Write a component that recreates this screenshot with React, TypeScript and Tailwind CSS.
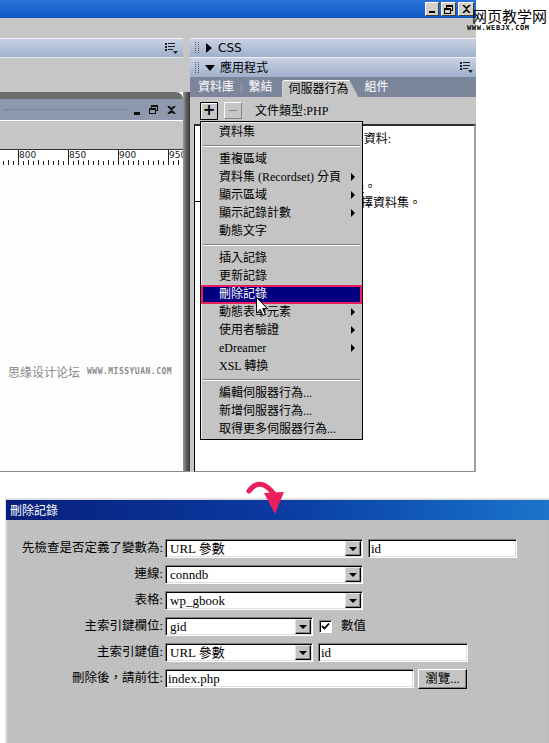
import React from "react";

type Item = { t: string; sub?: boolean; sel?: boolean } | "sep";

const menu: Item[] = [
  { t: "資料集" },
  "sep",
  { t: "重複區域" },
  { t: "資料集 (Recordset) 分頁", sub: true },
  { t: "顯示區域", sub: true },
  { t: "顯示記錄計數", sub: true },
  { t: "動態文字" },
  "sep",
  { t: "插入記錄" },
  { t: "更新記錄" },
  { t: "刪除記錄", sel: true },
  { t: "動態表單元素", sub: true },
  { t: "使用者驗證", sub: true },
  { t: "eDreamer", sub: true },
  { t: "XSL 轉換" },
  "sep",
  { t: "編輯伺服器行為..." },
  { t: "新增伺服器行為..." },
  { t: "取得更多伺服器行為..." },
];

function OptionsIcon() {
  return (
    <svg width="13" height="11" viewBox="0 0 13 11">
      <rect x="0" y="0" width="2" height="2" fill="#222" />
      <rect x="3" y="0" width="7" height="1" fill="#222" />
      <rect x="0" y="3" width="2" height="2" fill="#222" />
      <rect x="3" y="3" width="7" height="1" fill="#222" />
      <rect x="0" y="6" width="2" height="2" fill="#222" />
      <rect x="3" y="6" width="5" height="1" fill="#222" />
      <polygon points="8,8 13,8 10.5,11" fill="#222" />
    </svg>
  );
}

function Grip() {
  return (
    <svg width="5" height="12" viewBox="0 0 5 12">
      {[0, 2, 4, 6, 8, 10].map((y) => (
        <g key={y}>
          <rect x="0" y={y} width="1" height="1" fill="#555" />
          <rect x="3" y={y} width="1" height="1" fill="#555" />
        </g>
      ))}
    </svg>
  );
}

function Ruler() {
  const ticks = [];
  for (let x = 3; x < 183; x += 5) ticks.push(x);
  return (
    <svg width="183" height="16" viewBox="0 0 183 16" className="block">
      <rect x="0" y="0" width="183" height="16" fill="#fff" />
      <rect x="0" y="0" width="183" height="1" fill="#333" />
      {ticks.map((x) => {
        const major = (x - 18) % 50 === 0;
        const mid = (x - 18) % 10 === 0;
        return (
          <rect
            key={x}
            x={x}
            y={major ? 1 : mid ? 11 : 12}
            width="1"
            height={major ? 15 : mid ? 5 : 4}
            fill="#222"
          />
        );
      })}
      {[
        [19, "800"],
        [69, "850"],
        [119, "900"],
        [169, "950"],
      ].map(([x, t]) => (
        <text key={t as string} x={x as number} y="9" fontSize="9" fontFamily="DejaVu Sans, sans-serif" fill="#222">
          {t}
        </text>
      ))}
    </svg>
  );
}

function Select({ w, value }: { w: string; value: string }) {
  return (
    <div
      className={`flex items-center h-[19px] ${w} bg-white border border-t-[#808080] border-l-[#808080] border-r-white border-b-white shadow-[inset_1px_1px_0_#000,inset_-1px_-1px_0_#dfdfdf] p-[1px]`}
    >
      <span className="flex-1 pl-[3px] text-[13px] leading-none whitespace-nowrap">{value}</span>
      <div className="w-[16px] h-full flex items-center justify-center bg-[#c4c4c4] border border-t-[#e4e4e4] border-l-[#e4e4e4] border-r-black border-b-black shadow-[inset_-1px_-1px_0_#808080]">
        <div className="w-0 h-0 border-x-[4px] border-x-transparent border-t-[4px] border-t-black" />
      </div>
    </div>
  );
}

function Input({ w, value }: { w: string; value: string }) {
  return (
    <div
      className={`flex items-center h-[19px] ${w} bg-white border border-t-[#808080] border-l-[#808080] border-r-white border-b-white shadow-[inset_1px_1px_0_#000,inset_-1px_-1px_0_#dfdfdf] pl-[2px]`}
    >
      <span className="text-[13px] leading-none whitespace-nowrap">{value}</span>
    </div>
  );
}

export default function App() {
  return (
    <div className="relative w-[549px] h-[743px] bg-white overflow-hidden text-[12px] text-black font-['Liberation_Serif','Noto_Sans_CJK_TC',serif]">
      {/* captured editor window */}
      <div className="w-[476px] h-[472px] flex flex-col">
        {/* window title bar */}
        <div className="h-[18px] bg-gradient-to-b from-[#2a74d8] to-[#0d58c4] flex items-center justify-end gap-[2px] pr-[2px]">
          <div className="w-[14px] h-[14px] bg-[#d4d0c8] border border-t-white border-l-white border-r-[#404040] border-b-[#404040] flex items-end justify-center pb-[2px]">
            <div className="w-[6px] h-[2px] bg-black" />
          </div>
          <div className="w-[15px] h-[14px] bg-[#d4d0c8] border border-t-white border-l-white border-r-[#404040] border-b-[#404040] flex items-center justify-center">
            <svg width="9" height="9" viewBox="0 0 9 9">
              <rect x="2.5" y="0.5" width="6" height="5" fill="none" stroke="#000" />
              <rect x="2" y="0" width="7" height="2" fill="#000" />
              <rect x="0.5" y="3.5" width="6" height="5" fill="#d4d0c8" stroke="#000" />
              <rect x="0" y="3" width="7" height="2" fill="#000" />
            </svg>
          </div>
          <div className="w-[16px] h-[14px] bg-[#d4d0c8] border border-t-white border-l-white border-r-[#404040] border-b-[#404040] flex items-center justify-center">
            <svg width="9" height="8" viewBox="0 0 9 8">
              <path d="M1 0 L4.5 3.2 L8 0 M1 8 L4.5 4.8 L8 8" stroke="#000" strokeWidth="1.6" fill="none" />
            </svg>
          </div>
        </div>
        <div className="h-[20px] bg-[#c6c6c6]" />

        <div className="flex-1 flex">
          {/* left pane */}
          <div className="w-[183px] flex flex-col border-b border-[#8a8a8a]">
            <div className="h-[19px] border-t border-[#eef1f6] bg-gradient-to-b from-[#c9d2e3] to-[#9fb0cc] flex items-center justify-end pr-[5px]">
              <OptionsIcon />
            </div>
            <div className="h-[35px] bg-[#c6c6c6] border-t border-[#e8e8e8]" />
            <div className="h-[7px] bg-[#6c6c6c] rounded-tr-[7px]" />
            <div className="h-[22px] bg-[#8f99ae] border-b border-white flex items-center">
              <div className="flex-1 mx-[4px] border-t border-dotted border-[#6d7588]" />
              <div className="flex items-center gap-[9px] pr-[7px]">
                <div className="w-[6px] h-[3px] bg-[#111] mt-[7px]" />
                <svg width="9" height="9" viewBox="0 0 9 9">
                  <rect x="2.5" y="0.5" width="6" height="5" fill="none" stroke="#111" />
                  <rect x="2" y="0" width="7" height="2" fill="#111" />
                  <rect x="0.5" y="3.5" width="6" height="5" fill="#8f99ae" stroke="#111" />
                  <rect x="0" y="3" width="7" height="2" fill="#111" />
                </svg>
                <svg width="9" height="8" viewBox="0 0 9 8">
                  <path d="M1 0 L4.5 3.2 L8 0 M1 8 L4.5 4.8 L8 8" stroke="#111" strokeWidth="2" fill="none" />
                </svg>
              </div>
            </div>
            <div className="h-[28px] bg-[#c6c6c6]" />
            <Ruler />
            <div className="flex-1 bg-[#fcfdfd] pt-[200px] pl-[8px] flex items-center gap-[7px] items-start">
              <span className="text-[12px] leading-[14px] text-[#8a8a8a] font-['Noto_Sans_CJK_SC',sans-serif]">思缘设计论坛</span>
              <span className="text-[8px] leading-[14px] text-[#8a8a8a] tracking-[0.5px] font-['DejaVu_Sans_Mono',monospace] font-bold">WWW.MISSYUAN.COM</span>
            </div>
          </div>

          {/* splitter */}
          <div className="w-[7px] flex flex-col">
            <div className="h-[54px] bg-[#c6c6c6]" />
            <div className="flex-1 bg-gradient-to-r from-[#9a9a9a] via-[#5e5e5e] to-[#3a3a3a] border-b border-[#8a8a8a]" />
          </div>

          {/* right pane */}
          <div className="relative w-[286px] flex flex-col bg-[#c6c6c6]">
            <div className="h-[19px] border-t border-[#eef1f6] bg-gradient-to-b from-[#c9d2e3] to-[#9fb0cc] flex items-center pl-[5px] gap-[6px]">
              <Grip />
              <div className="w-0 h-0 border-y-[5px] border-y-transparent border-l-[6px] border-l-black" />
              <span className="text-[12px] leading-none font-['DejaVu_Sans',sans-serif]">CSS</span>
            </div>
            <div className="h-[20px] border-t border-[#eef1f6] bg-gradient-to-b from-[#c9d2e3] to-[#9fb0cc] flex items-center pl-[5px] gap-[5px]">
              <Grip />
              <div className="w-0 h-0 border-x-[5px] border-x-transparent border-t-[6px] border-t-black" />
              <span className="text-[12px] leading-none">應用程式</span>
              <div className="ml-auto pr-[3px]">
                <OptionsIcon />
              </div>
            </div>
            <div className="h-[20px] bg-[#7b869b] flex items-center pl-[8px] text-white text-[12px]">
              <span>資料庫</span>
              <span className="px-[6px] text-[#aab3c3]">|</span>
              <span>繫結</span>
              <div className="ml-[10px] self-end h-[17px] w-[76px] bg-[#c6c6c6] border-t border-l border-white rounded-tl-[3px] [clip-path:polygon(0_0,88%_0,100%_100%,0_100%)] text-black pl-[5px] leading-[16px]">
                伺服器行為
              </div>
              <span className="pl-[6px]">組件</span>
            </div>
            <div className="h-[27px] flex items-center pl-[10px]">
              <div className="w-[18px] h-[18px] bg-[#c6c6c6] border border-black shadow-[inset_1px_1px_0_#fff] flex items-center justify-center text-[15px] font-bold leading-none font-['DejaVu_Sans',sans-serif]">
                +
              </div>
              <div className="ml-[6px] w-[18px] h-[17px] bg-[#c6c6c6] border border-t-white border-l-white border-r-[#808080] border-b-[#808080] flex items-center justify-center">
                <div className="w-[8px] h-[1px] bg-[#888]" />
              </div>
              <span className="ml-[13px] whitespace-nowrap">文件類型:PHP</span>
            </div>
            <div className="flex-1 ml-[4px] bg-white border-t-2 border-l border-t-[#303030] border-l-black border-r-2 border-r-[#a0a0a0] border-b border-b-[#8a8a8a] overflow-hidden pt-[5px] leading-[16px]">
              <div className="flex justify-end w-[196px] whitespace-nowrap">
                <span className="shrink-0">若要在此頁面上使用動態資料:</span>
              </div>
              <div className="flex justify-end w-[120px] whitespace-nowrap">
                <span className="shrink-0">1. 建立網站。</span>
              </div>
              <div className="flex justify-end w-[140px] whitespace-nowrap">
                <span className="shrink-0">2. 選擇文件類型。</span>
              </div>
              <div className="flex justify-end w-[181px] whitespace-nowrap">
                <span className="shrink-0">
                  3. 設定網站的<span className="text-[#0000cc] underline">測試伺服器</span>。
                </span>
              </div>
              <div className="flex justify-end w-[226px] whitespace-nowrap">
                <span className="shrink-0">4. 按一下 [繫結] 面板上的 + 按鈕並選擇資料集。</span>
              </div>
            </div>

            {/* popup menu */}
            <div className="absolute left-[10px] top-[83px] w-[163px] h-[319px] bg-[#c4c4c4] border border-black shadow-[inset_1px_1px_0_#f0f0f0] py-[1px]">
              {menu.map((m, i) =>
                m === "sep" ? (
                  <div key={i} className="h-[9px] flex items-center px-[2px]">
                    <div className="w-full border-t border-b border-t-[#808080] border-b-white" />
                  </div>
                ) : (
                  <div
                    key={i}
                    className={
                      m.sel
                        ? "h-[19px] -my-[0.5px] flex items-center pl-[16px] pr-[7px] bg-[#000080] border-2 border-[#e8205a] text-white whitespace-nowrap"
                        : "h-[18px] flex items-center pl-[18px] pr-[7px] whitespace-nowrap"
                    }
                  >
                    <span>{m.t}</span>
                    {m.sub && (
                      <div className="ml-auto w-0 h-0 border-y-[4px] border-y-transparent border-l-[4px] border-l-black" />
                    )}
                  </div>
                )
              )}
            </div>

            {/* mouse cursor */}
            <svg className="absolute left-[66px] top-[259px]" width="13" height="20" viewBox="0 0 13 20">
              <path d="M0.5 0.5 L0.5 16 L4.3 12.4 L7 18.5 L9.3 17.5 L6.7 11.6 L11.5 11.6 Z" fill="#fff" stroke="#000" strokeWidth="1" />
            </svg>
          </div>
        </div>
      </div>

      {/* watermark top right */}
      <div className="absolute left-[472px] top-[8px] flex flex-col items-start">
        <span className="text-[15px] leading-[16px] font-['Noto_Sans_CJK_SC',sans-serif] text-black">网页教学网</span>
        <span className="text-[7px] leading-[9px] font-['DejaVu_Sans_Mono',monospace] font-bold tracking-[0.6px] -ml-[5px]">WWW.WEBJX.COM</span>
      </div>

      {/* red arrow */}
      <svg className="absolute left-[238px] top-[476px]" width="50" height="42" viewBox="0 0 50 42">
        <path d="M11 15 Q22 0 36 18" stroke="#ea1f5c" strokeWidth="5" fill="none" strokeLinecap="round" />
        <polygon points="26,17 46,16 37,38" fill="#ea1f5c" />
      </svg>

      {/* dialog */}
      <div className="mt-[26px] ml-[5px] h-[245px] flex flex-col border-t border-l border-[#e4e4e4] bg-[#dcdcdc] pt-[1px]">
        <div className="h-[20px] bg-gradient-to-r from-[#081f7a] via-[#0b3aa2] to-[#1c74cc] flex items-center pl-[4px] text-white text-[12px] font-['Noto_Sans_CJK_TC',sans-serif]">
          刪除記錄
        </div>
        <div className="flex-1 ml-[1px] bg-[repeating-linear-gradient(90deg,#c3c3c3_0px,#c3c3c3_1px,#bdbdbd_1px,#bdbdbd_2px)] pt-[19px] flex flex-col gap-[7px] text-[12.5px]">
          <div className="flex items-center h-[19px]">
            <div className="w-[158px] pr-[2px] text-right whitespace-nowrap">先檢查是否定義了變數為:</div>
            <Select w="w-[198px]" value="URL 參數" />
            <div className="w-[5px]" />
            <Input w="w-[149px]" value="id" />
          </div>
          <div className="flex items-center h-[19px]">
            <div className="w-[158px] pr-[2px] text-right whitespace-nowrap">連線:</div>
            <Select w="w-[198px]" value="conndb" />
          </div>
          <div className="flex items-center h-[19px]">
            <div className="w-[158px] pr-[2px] text-right whitespace-nowrap">表格:</div>
            <Select w="w-[198px]" value="wp_gbook" />
          </div>
          <div className="flex items-center h-[19px]">
            <div className="w-[158px] pr-[2px] text-right whitespace-nowrap">主索引鍵欄位:</div>
            <Select w="w-[148px]" value="gid" />
            <div className="ml-[6px] w-[13px] h-[13px] bg-white border border-t-[#808080] border-l-[#808080] border-r-white border-b-white shadow-[inset_1px_1px_0_#000] flex items-center justify-center">
              <svg width="9" height="9" viewBox="0 0 9 9">
                <path d="M1 4 L3.5 6.5 L8 1.5" stroke="#000" strokeWidth="1.8" fill="none" />
              </svg>
            </div>
            <span className="ml-[9px]">數值</span>
          </div>
          <div className="flex items-center h-[19px]">
            <div className="w-[158px] pr-[2px] text-right whitespace-nowrap">主索引鍵值:</div>
            <Select w="w-[148px]" value="URL 參數" />
            <div className="w-[5px]" />
            <Input w="w-[150px]" value="id" />
          </div>
          <div className="flex items-center h-[19px]">
            <div className="w-[158px] pr-[2px] text-right whitespace-nowrap">刪除後，請前往:</div>
            <Input w="w-[249px]" value="index.php" />
            <div className="ml-[4px] w-[49px] h-[20px] mt-[1px] bg-[#c4c4c4] border border-t-white border-l-white border-r-black border-b-black shadow-[inset_-1px_-1px_0_#808080] flex items-center justify-center whitespace-nowrap">
              瀏覽...
            </div>
          </div>
        </div>
      </div>
    </div>
  );
}
